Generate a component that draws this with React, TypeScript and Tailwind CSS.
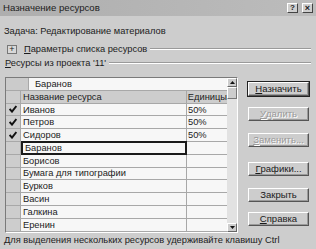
import { Fragment } from 'react'

interface Resource {
  name: string
  units: string
  checked: boolean
}

const resources: Resource[] = [
  { name: 'Иванов', units: '50%', checked: true },
  { name: 'Петров', units: '50%', checked: true },
  { name: 'Сидоров', units: '50%', checked: true },
  { name: 'Баранов', units: '', checked: false },
  { name: 'Борисов', units: '', checked: false },
  { name: 'Бумага для типографии', units: '', checked: false },
  { name: 'Бурков', units: '', checked: false },
  { name: 'Васин', units: '', checked: false },
  { name: 'Галкина', units: '', checked: false },
  { name: 'Еренин', units: '', checked: false },
]

function Check() {
  return (
    <svg width="8" height="8" viewBox="0 0 8 8">
      <path d="M0.6 4 L3 6.6 L7.4 1" fill="none" stroke="#111" strokeWidth="2" />
    </svg>
  )
}

function Button({
  hotkey,
  rest,
  disabled,
  isDefault,
  className,
}: {
  hotkey: string
  rest: string
  disabled?: boolean
  isDefault?: boolean
  className?: string
}) {
  return (
    <div
      className={`w-[61px] h-[14px] flex items-center justify-center text-[9.5px] leading-none bg-[#cdcdcd] border border-t-white border-l-white border-r-[#555] border-b-[#555] shadow-[inset_-1px_-1px_0_#9a9a9a] ${
        isDefault ? 'outline outline-1 outline-[#222]' : ''
      } ${disabled ? 'text-[#9a9a9a] [text-shadow:1px_1px_0_#fff]' : 'text-[#1a1a1a]'} ${className ?? ''}`}
    >
      <span className="underline underline-offset-1">{hotkey}</span>
      {rest}
    </div>
  )
}

export default function App() {
  return (
    <div
      className="w-[316px] h-[249px] overflow-hidden bg-[#cdcdcd] text-[#1c1c1c] flex flex-col"
      style={{ fontFamily: '"Liberation Sans", Arial, sans-serif' }}
    >
      {/* Title bar */}
      <div className="h-[16px] shrink-0 flex items-center bg-gradient-to-r from-[#aeaeae] to-[#bcbcbc] pl-[3px] pr-[3px]">
        <span className="text-[9.6px] leading-none">Назначение ресурсов</span>
        <div className="ml-auto flex gap-[4px]">
          <div className="w-[11px] h-[10px] flex items-center justify-center bg-[#cfcfcf] border border-t-white border-l-white border-r-[#444] border-b-[#444] text-[8px] font-bold leading-none">
            ?
          </div>
          <div className="w-[11px] h-[10px] flex items-center justify-center bg-[#cfcfcf] border border-t-white border-l-white border-r-[#444] border-b-[#444] text-[9px] font-bold leading-none">
            ×
          </div>
        </div>
      </div>

      <div className="flex flex-col pl-[4px] text-[9.3px] leading-[12px]">
        <div className="mt-[9px] h-[12px]">Задача: Редактирование материалов</div>

        {/* Resource list options */}
        <div className="mt-[6px] h-[12px] flex items-center">
          <div className="ml-[3px] w-[10px] h-[9px] flex items-center justify-center border border-[#777] bg-[#d8d8d8] text-[9px] leading-none">
            +
          </div>
          <span className="ml-[7px]">
            <span className="underline underline-offset-1">П</span>араметры списка ресурсов
          </span>
          <div className="ml-[3px] mr-[5px] flex-1 border-t border-t-[#9a9a9a] border-b border-b-white" />
        </div>

        <div className="mt-[2px] h-[12px] flex items-center">
          <span className="ml-[1px]">
            <span className="underline underline-offset-1">Р</span>есурсы из проекта '11'
          </span>
          <div className="ml-[3px] mr-[5px] flex-1 border-t border-t-[#9a9a9a] border-b border-b-white" />
        </div>

        <div className="mt-[8px] flex">
          {/* Grid */}
          <div className="ml-[1px] flex border border-t-[#7a7a7a] border-l-[#7a7a7a] border-r-white border-b-white bg-[#cdcdcd]">
            <div className="w-[221px] flex flex-col">
              <div className="h-[12.8px] flex border-b border-[#a8a8a8]">
                <div className="w-[23px] border-r border-[#a8a8a8] bg-[#cbcbcb]" />
                <div className="flex-1 bg-[#f7f7f7] pl-[6px] flex items-center">Баранов</div>
              </div>
              <div className="h-[12.8px] flex border-b border-[#a8a8a8]">
                <div className="w-[15px] border-r border-[#a8a8a8]" />
                <div className="w-[166px] border-r border-[#a8a8a8] pl-[2px] flex items-center">Название ресурса</div>
                <div className="flex-1 pl-[1px] flex items-center">Единицы</div>
              </div>
              {resources.map((r, i) => (
                <Fragment key={r.name}>
                  <div className="h-[12.8px] flex border-b border-[#a8a8a8]">
                    <div className="w-[15px] border-r border-[#a8a8a8] flex items-center justify-center">
                      {r.checked && <Check />}
                    </div>
                    <div
                      className={`w-[166px] bg-[#f7f7f7] pl-[2px] flex items-center ${
                        i === 3 ? 'border-2 border-[#1a1a1a] -mt-px h-[calc(100%+2px)] -mb-px relative' : 'border-r border-[#a8a8a8]'
                      }`}
                    >
                      {r.name}
                    </div>
                    <div className="flex-1 bg-[#f7f7f7] pl-[1px] flex items-center">{r.units}</div>
                  </div>
                </Fragment>
              ))}
            </div>

            {/* Scrollbar */}
            <div className="w-[10px] flex flex-col bg-[#e2e2e2]">
              <div className="h-[9px] flex items-center justify-center bg-[#cdcdcd] border border-t-white border-l-white border-r-[#666] border-b-[#666]">
                <svg width="5" height="3" viewBox="0 0 5 3">
                  <path d="M2.5 0 L5 3 L0 3 Z" fill="#111" />
                </svg>
              </div>
              <div className="h-[12px] bg-[#cdcdcd] border border-t-white border-l-white border-r-[#777] border-b-[#777]" />
              <div className="flex-1" />
              <div className="h-[9px] flex items-center justify-center bg-[#cdcdcd] border border-t-white border-l-white border-r-[#666] border-b-[#666]">
                <svg width="5" height="3" viewBox="0 0 5 3">
                  <path d="M0 0 L5 0 L2.5 3 Z" fill="#111" />
                </svg>
              </div>
            </div>
          </div>

          {/* Buttons */}
          <div className="ml-[10px] flex flex-col">
            <Button className="mt-[5px]" hotkey="Н" rest="азначить" isDefault />
            <Button className="mt-[11px]" hotkey="У" rest="далить" disabled />
            <Button className="mt-[12px]" hotkey="З" rest="аменить..." disabled />
            <Button className="mt-[15px]" hotkey="Г" rest="рафики..." />
            <Button className="mt-[12px]" hotkey="" rest="Закрыть" />
            <Button className="mt-[10px]" hotkey="С" rest="правка" />
          </div>
        </div>

        <div className="mt-[1px] h-[12px]">Для выделения нескольких ресурсов удерживайте клавишу Ctrl</div>
      </div>
    </div>
  )
}
